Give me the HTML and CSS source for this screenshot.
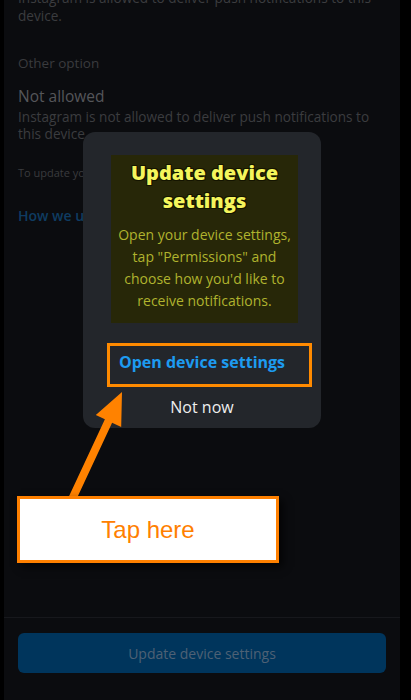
FILE: index.html
```html
<!DOCTYPE html>
<html lang="en">
<head>
<meta charset="utf-8">
<title>Notifications</title>
<link rel="stylesheet" href="styles.css">
</head>
<body>
<div class="screen">
  <div class="content">
    <p class="desc top">Instagram is allowed to deliver push notifications to this device.</p>
    <p class="label">Other option</p>
    <p class="option">Not allowed</p>
    <p class="desc">Instagram is not allowed to deliver push notifications to this device.</p>
    <p class="small">To update your settings, go to your</p>
    <p class="link">How we use notifications</p>
  </div>
  <div class="footer">
    <div class="primary">Update device settings</div>
  </div>
</div>

<div class="dialog">
  <div class="dialog-body">
    <h2 class="dialog-title">Update device settings</h2>
    <p class="dialog-text">Open your device settings, tap "Permissions" and choose how you'd like to receive notifications.</p>
  </div>
  <div class="dialog-action blue">Open device settings</div>
  <div class="dialog-action">Not now</div>
  <div class="highlight"></div>
</div>

<svg class="arrow" width="411" height="700" viewBox="0 0 411 700" aria-hidden="true">
  <polygon fill="#ff8200" points="122,392 121.2,426.9 112.1,422.7 76.2,499.7 69,496.3 104.9,419.3 95.8,415.1"/>
</svg>

<div class="callout">Tap here</div>
</body>
</html>
```
FILE: styles.css
```css
html, body {
  margin: 0;
  padding: 0;
}
body {
  width: 411px;
  height: 700px;
  background: #000;
  position: relative;
  overflow: hidden;
  font-family: "Open Sans", "Liberation Sans", sans-serif;
}
.screen {
  margin-left: 4px;
  width: 396px;
  height: 700px;
  background: #0b0c0f;
  display: flex;
  flex-direction: column;
}
.content {
  padding: 0 14px;
  margin-top: -11px;
}
.content p {
  margin: 0;
}
.desc {
  font-size: 13.6px;
  line-height: 17px;
  color: #3b3c3f;
  width: 362px;
}
.desc.top {
  line-height: 18px;
}
.label {
  margin-top: 29px !important;
  font-size: 13.5px;
  line-height: 18px;
  color: #3a3b3e;
}
.option {
  margin-top: 14px !important;
  font-size: 15.5px;
  line-height: 20px;
  color: #55565a;
}
.option + .desc {
  margin-top: 2px;
}
.small {
  margin-top: 23px !important;
  font-size: 11px;
  line-height: 16px;
  color: #3a3b3e;
}
.link {
  margin-top: 26px !important;
  font-size: 14px;
  line-height: 18px;
  font-weight: 600;
  color: #0f3c62;
}
.footer {
  margin-top: auto;
  border-top: 1px solid #17181c;
  padding: 15px 14px 27px;
}
.primary {
  height: 40px;
  border-radius: 6px;
  background: #00355c;
  color: #4e6175;
  font-size: 14px;
  display: flex;
  align-items: center;
  justify-content: center;
}

.dialog {
  position: absolute;
  left: 83px;
  top: 132px;
  width: 238px;
  height: 296px;
  box-sizing: border-box;
  padding: 23px 23px 0 28px;
  background: #23262b;
  border-radius: 12px;
}
.dialog-body {
  height: 168px;
  box-sizing: border-box;
  background: #272708;
  padding: 4px 2px 11px;
  text-align: center;
}
.dialog-title {
  margin: 0;
  font-size: 20px;
  line-height: 28px;
  font-weight: 800;
  color: #f4f55c;
  text-shadow: 1px 1px 0 #141400, -1px -1px 0 #141400, 1px -1px 0 #141400, -1px 1px 0 #141400;
}
.dialog-text {
  margin: 9px 0 0;
  font-size: 14px;
  line-height: 22px;
  color: #b0b32e;
}
.dialog-action {
  height: 40px;
  display: flex;
  align-items: center;
  justify-content: center;
  margin-left: -5px;
  font-size: 16px;
  color: #eeeeee;
}
.dialog-action.blue {
  margin-top: 19px;
  font-weight: 700;
  color: #1d9bf0;
  margin-bottom: 5px;
}
.highlight {
  position: absolute;
  left: 24px;
  top: 211px;
  width: 205px;
  height: 44px;
  box-sizing: border-box;
  border: 3px solid #ff8a00;
}

.arrow {
  position: absolute;
  left: 0;
  top: 0;
}
.callout {
  position: absolute;
  left: 17px;
  top: 496px;
  width: 262px;
  height: 67px;
  box-sizing: border-box;
  border: 3px solid #ff8000;
  background: #fff;
  box-shadow: 4px 4px 8px rgba(0, 0, 0, 0.7);
  display: flex;
  align-items: center;
  justify-content: center;
  font-family: "Liberation Sans", Arial, sans-serif;
  font-size: 24px;
  color: #ff8000;
}
```
